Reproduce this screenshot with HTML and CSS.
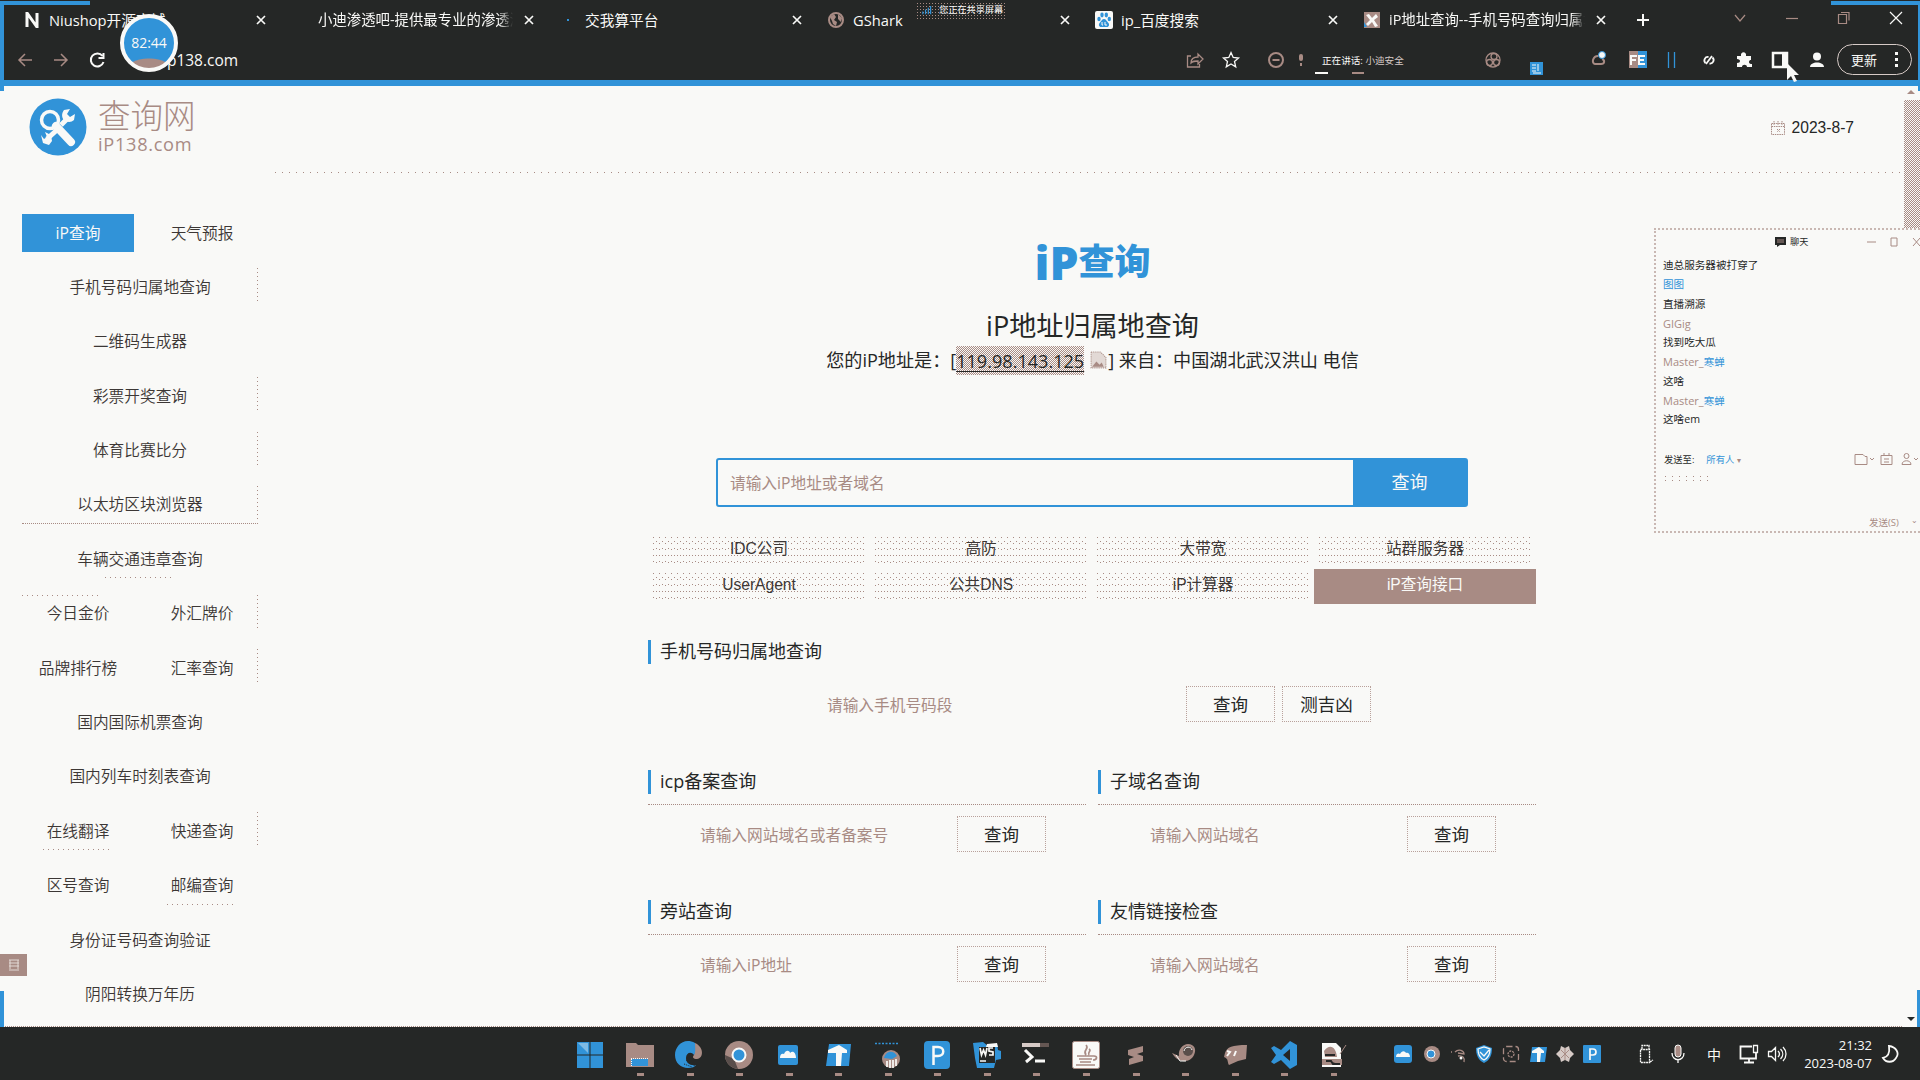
FILE: index.html
```html
<!DOCTYPE html>
<html lang="zh-CN">
<head>
<meta charset="utf-8">
<title>iP地址查询</title>
<link rel="stylesheet" href="styles.css">
</head>
<body>
<header class="browser">
  <div class="tabs">
    <div class="tab"><svg class="fav" viewBox="0 0 16 16"><path d="M3 15V1l10 14V1" fill="none" stroke="#f9f9f7" stroke-width="3"/></svg><span class="tab-title">Niushop开源商城</span><span class="x"><svg viewBox="0 0 10 10"><path d="M1 1l8 8M9 1l-8 8"/></svg></span></div>
    <div class="tab"><span class="tab-title wide">小迪渗透吧-提供最专业的渗透测</span><span class="x"><svg viewBox="0 0 10 10"><path d="M1 1l8 8M9 1l-8 8"/></svg></span></div>
    <div class="tab"><i class="speck"></i><span class="tab-title">交我算平台</span><span class="x"><svg viewBox="0 0 10 10"><path d="M1 1l8 8M9 1l-8 8"/></svg></span></div>
    <div class="tab"><svg class="fav" viewBox="0 0 16 16"><circle cx="8" cy="8" r="7" fill="#252726" stroke="#a88b84" stroke-width="2"/><path d="M2 5l4-3 2 3-2 3 3 2-1 4-3-2-1-3zM10 2l4 4-1 4-3-3z" fill="#a88b84"/></svg><span class="tab-title">GShark</span><span class="x"><svg viewBox="0 0 10 10"><path d="M1 1l8 8M9 1l-8 8"/></svg></span></div>
    <div class="tab"><svg class="fav baidu" viewBox="0 0 18 18"><rect width="18" height="18" rx="2" fill="#f9f9f7"/><g fill="#3193d8"><ellipse cx="4" cy="8" rx="1.7" ry="2.3"/><ellipse cx="7" cy="4" rx="1.7" ry="2.4"/><ellipse cx="11.3" cy="4" rx="1.7" ry="2.4"/><ellipse cx="14.3" cy="8" rx="1.7" ry="2.3"/><path d="M9 8c2 0 2.500 2 4 3.500 2 2 1 4.500-1 4.500H6c-2 0-3-2.500-1-4.500C6.500 10 7 8 9 8z"/></g><path d="M7 11v3h1M10 11v3h2" stroke="#f9f9f7" fill="none"/></svg><span class="tab-title">ip_百度搜索</span><span class="x"><svg viewBox="0 0 10 10"><path d="M1 1l8 8M9 1l-8 8"/></svg></span></div>
    <div class="tab"><svg class="fav" viewBox="0 0 16 16"><rect width="16" height="16" fill="#a88b84"/><path d="M2 3l3-1 3 4 4-4 2 3-4 3 4 6-3 1-3-5-4 4-2-2 4-4z" fill="#f9f9f7"/><path d="M0 10l3 5H0z" fill="#3193d8"/></svg><span class="tab-title wide">iP地址查询--手机号码查询归属地</span><span class="x"><svg viewBox="0 0 10 10"><path d="M1 1l8 8M9 1l-8 8"/></svg></span></div>
    <svg class="plus" viewBox="0 0 14 14"><path d="M7 1v12M1 7h12" stroke="#f9f9f7" stroke-width="2"/></svg>
    <div class="winbtns">
      <svg viewBox="0 0 14 14"><path d="M2 4l5 6 5-6"/></svg>
      <svg viewBox="0 0 14 14"><path d="M1 7.500h12"/></svg>
      <svg viewBox="0 0 14 14"><path d="M1.500 3.500h8v9h-8zM4 1.500h8v8"/></svg>
      <svg viewBox="0 0 14 14"><path d="M1 1l12 12M13 1L1 13" stroke="#f9f9f7"/></svg>
    </div>
  </div>
  <div class="toolbar">
    <div class="nav">
      <svg viewBox="0 0 18 18"><path d="M16 9H3M9 3L3 9l6 6" stroke="#a88b84"/></svg>
      <svg viewBox="0 0 18 18"><path d="M2 9h13M9 3l6 6-6 6" stroke="#a88b84"/></svg>
      <svg viewBox="0 0 18 18"><path d="M14.500 5A6.500 6.500 0 1 0 15.500 11M15.500 2v5h-5" stroke="#f9f9f7" stroke-width="2"/></svg>
      <span class="url">ip138.com</span>
    </div>
    <div class="tools">
      <svg viewBox="0 0 20 20"><path d="M6 6H2.500v11h12v-3M6 13c0-4 3-6 7-6V4l5 5-5 5v-3c-4 0-5 0-7 2z" class="b"/></svg>
      <svg viewBox="0 0 20 20"><path d="M10 2.500l2.200 5 5.300.5-4 3.500 1.200 5.300-4.700-2.800-4.700 2.800 1.200-5.300-4-3.500 5.300-.5z" class="w"/></svg>
      <svg viewBox="0 0 20 20"><circle cx="10" cy="10" r="7" class="b2"/><path d="M6.500 10h7" class="b2"/></svg>
      <svg viewBox="0 0 20 20"><rect x="8" y="4" width="4" height="7" rx="2" fill="#a88b84"/><path d="M10 13v3" class="b2"/></svg>
      <span class="speaking"><b>正在讲话:</b> 小迪安全</span>
      <svg viewBox="0 0 20 20"><circle cx="10" cy="10" r="7" class="b"/><circle cx="6.500" cy="12.500" r="3" class="b"/><circle cx="13.500" cy="12.500" r="3" class="b"/><circle cx="11" cy="6.500" r="3" class="b"/></svg>
      <svg viewBox="0 0 20 20" class="low"><rect x="3" y="3" width="13" height="13" fill="#3193d8"/><path d="M5 6h4M5 9h4M5 12h4M11 5v7M6 14h8" stroke="#f9f9f7"/></svg>
      <svg viewBox="0 0 20 20"><path d="M9 6c-5 0-7 7-3 8h6c4 0 4-4 1-5" class="b2"/><circle cx="13" cy="5" r="3.500" fill="#f9f9f7" stroke="#3193d8"/></svg>
      <svg viewBox="0 0 20 20"><rect x="1" y="1" width="9" height="17" fill="#a88b84"/><rect x="10" y="1" width="9" height="17" fill="#3193d8"/><path d="M3 15V6h6M3 10h5M17 6h-6v8h6M11 10h5" fill="none" stroke="#f9f9f7" stroke-width="2"/></svg>
      <svg viewBox="0 0 20 20"><path d="M7.500 2v16M13.500 2v16" stroke="#3193d8" stroke-width="1.300"/></svg>
      <svg viewBox="0 0 20 20"><path d="M6.500 13a3.500 3.500 0 0 1 3-6M13.500 7.500a3.500 3.500 0 0 1-3 6M13 6L7 14" class="w2"/></svg>
      <svg viewBox="0 0 20 20"><path d="M3 6h4c-1-5 6-5 5 0h5v4c-1 0-2 .5-2 2s1 2 3 2v3h-5c0-3-5-3-5 0H3v-4c4 0 4-4 0-4z" fill="#f9f9f7"/></svg>
      <svg viewBox="0 0 20 20"><path d="M3 3h14v14H3z" fill="none" stroke="#f9f9f7" stroke-width="2.500"/><path d="M12 3h5v14h-5z" fill="#f9f9f7"/></svg>
      <svg viewBox="0 0 20 20"><circle cx="10" cy="6.500" r="4" fill="#f9f9f7"/><path d="M3 17c0-6 14-6 14 0z" fill="#f9f9f7"/></svg>
      <span class="update">更新<i></i></span>
    </div>
  </div>
</header>

<main class="page">
  <div class="site-head">
    <div class="logo">
      <svg viewBox="0 0 58 58"><circle cx="29" cy="29" r="28.500" fill="#3193d8"/><circle cx="21" cy="22" r="8.500" fill="none" stroke="#f9f9f7" stroke-width="3.500"/><path d="M27 28l15 16" stroke="#f9f9f7" stroke-width="8" stroke-linecap="round"/><path d="M29 31L18 41M32 27l7-7" stroke="#f9f9f7" stroke-width="5"/><path d="M35 12c-3 4-2 8 0 10s7 3 10 0l1-6-5 3-3-3 3-5zM12 37l2 8 6 2 3-4-1-6-6-3 2 5-3 2z" fill="#f9f9f7"/></svg>
      <div class="logo-text"><strong>查询网</strong><span>iP138.com</span></div>
    </div>
    <div class="date"><svg viewBox="0 0 16 16"><path d="M1.500 3.500h13v11h-13zM1.500 6.500h13M4 1v4M8 1v4M12 1v4M7 9l3 3M10 9l-3 3"/></svg>2023-8-7</div>
  </div>
  <div class="content">
    <nav class="side">
      <a class="on">iP查询</a><a class="bare">天气预报</a>
      <a class="full">手机号码归属地查询</a>
      <a class="full bare">二维码生成器</a>
      <a class="full">彩票开奖查询</a>
      <a class="full">体育比赛比分</a>
      <a class="full line">以太坊区块浏览器</a>
      <a class="full sparse">车辆交通违章查询</a>
      <a class="top">今日金价</a><a>外汇牌价</a>
      <a class="bare">品牌排行榜</a><a>汇率查询</a>
      <a class="full bare">国内国际机票查询</a>
      <a class="full bare">国内列车时刻表查询</a>
      <a class="sparse">在线翻译</a><a>快递查询</a>
      <a class="bare">区号查询</a><a class="sparse">邮编查询</a>
      <a class="full bare">身份证号码查询验证</a>
      <a class="full bare">阴阳转换万年历</a>
    </nav>
    <section class="main">
      <h1><span>iP</span>查询</h1>
      <h2>iP地址归属地查询</h2>
      <p class="ip">您的iP地址是：[<u>119.98.143.125</u><svg viewBox="0 0 18 18"><path d="M2 1h9l5 5v10H2z" fill="#e2d9d5" stroke="#a88b84" stroke-dasharray="1 1"/><path d="M3 15l4-5 3 3 2-2 2 4z" fill="#a88b84"/></svg>] 来自：中国湖北武汉洪山 电信</p>
      <div class="search"><span>请输入iP地址或者域名</span><b>查询</b></div>
      <div class="links"><a>IDC公司</a><a>高防</a><a>大带宽</a><a>站群服务器</a><a>UserAgent</a><a>公共DNS</a><a>iP计算器</a><a class="hot">iP查询接口</a></div>
      <div class="cards">
        <div class="card wide-card"><h3>手机号码归属地查询</h3><div class="form"><span>请输入手机号码段</span><b>查询</b><b>测吉凶</b></div></div>
        <div class="card"><h3>icp备案查询</h3><div class="form"><span>请输入网站域名或者备案号</span><b>查询</b></div></div>
        <div class="card"><h3>子域名查询</h3><div class="form"><span>请输入网站域名</span><b>查询</b></div></div>
        <div class="card"><h3>旁站查询</h3><div class="form"><span>请输入iP地址</span><b>查询</b></div></div>
        <div class="card"><h3>友情链接检查</h3><div class="form"><span>请输入网站域名</span><b>查询</b></div></div>
      </div>
    </section>
  </div>
</main>

<footer class="taskbar">
  <div class="apps">
    <svg viewBox="0 0 28 28"><path d="M1 1h12.500v12.500H1zM14.500 1H27v12.500H14.500zM1 14.500h12.500V27H1zM14.500 14.500H27V27H14.500z" fill="#3193d8"/><path d="M2 2h10v10z" fill="#9fcbe9" opacity=".7"/></svg>
    <svg viewBox="0 0 28 28"><path d="M0 2h10l2 2h16v22H0z" fill="#a88b84"/><path d="M5 18h17v7H5z" fill="#3193d8"/><path d="M5 17.500h17M5.500 18v8" stroke="#f9f9f7" stroke-dasharray="1 1"/></svg>
    <svg viewBox="0 0 28 28"><path d="M20 2c9 4 9 15 2 16-4 0-5-2-3-4z" fill="#a88b84"/><path d="M20 2C9-4 0 5 0 14c0 8 6 13 13 13 4 0 7-1 8-3-6 1-10-2-10-7 0-5 5-7 8-3 2-3 1-8 1-12z" fill="#3193d8"/><path d="M11 19l9 6M9 23l8 3" stroke="#252726" stroke-dasharray="1 1"/></svg>
    <svg viewBox="0 0 28 28"><circle cx="14" cy="14" r="14" fill="#a88b84"/><path d="M0 14l9 4 4 10C5 27 0 21 0 14z" fill="#594e4b"/><circle cx="14" cy="14" r="6.500" fill="#3193d8" stroke="#f9f9f7" stroke-width="2"/></svg>
    <svg viewBox="0 0 28 28"><rect x="4" y="4" width="20" height="20" rx="2" fill="#3193d8"/><path d="M6 17c0-4 2-5 4-4 2-5 6-3 6-1 3-3 6 0 6 5z" fill="#f9f9f7"/></svg>
    <svg viewBox="0 0 28 28"><path d="M5 3h22l-2 22H2z" fill="#3193d8"/><path d="M4 9l11-5 8 5v3h-5l-1 13h-5V12H4z" fill="#f9f9f7"/></svg>
    <svg viewBox="0 0 28 28"><path d="M1 2.500h23" stroke="#3193d8" stroke-dasharray="2 1.500" stroke-width="1.500"/><circle cx="17" cy="18" r="9" fill="#a88b84"/><path d="M10 17c2-8 10-8 13-2l-5 3z" fill="#3193d8"/><path d="M13 20v6M16 19v8M19 19v8M22 18v7" stroke="#f9f9f7" stroke-width="1.700"/></svg>
    <svg viewBox="0 0 28 28"><rect x="1" y="0" width="26" height="28" rx="4" fill="#3193d8"/><path d="M10.500 24V6H15c7 0 7 9 0 9h-4" fill="none" stroke="#f9f9f7" stroke-width="2.500"/></svg>
    <svg viewBox="0 0 28 28"><path d="M0 2l10-1 5 4 9-2 1 6 3 1v8l-5 1-2 8H4L2 17z" fill="#3193d8"/><path d="M6 6h16v16H6z" fill="#252726"/><path d="M14 3l10-1 1 4H13z" fill="#f9f9f7"/><path d="M7 7l1.500 7 2-5 2 5L14 7M20 7h-4v3l4 1v3h-4M7 20h6" fill="none" stroke="#f9f9f7" stroke-width="1.700"/></svg>
    <svg viewBox="0 0 28 28"><path d="M0 4h18" stroke="#d6cac6" stroke-width="4"/><path d="M18 4h9" stroke="#655753" stroke-width="4"/><path d="M3 9l7 7-6 5M13 20h10" fill="none" stroke="#f9f9f7" stroke-width="3"/></svg>
    <svg viewBox="0 0 28 28"><rect x=".5" y=".5" width="27" height="27" rx="2" fill="#f9f9f7" stroke="#a88b84"/><path d="M14 4c4 4-4 5 0 10M17 8c3 2-2 3 0 6M5 15h17c4 0 3 4-1 4M7 18h13M8 21h11M4 24h19" fill="none" stroke="#a88b84" stroke-width="1.700"/></svg>
    <svg viewBox="0 0 28 28"><path d="M6 9l15-4v6l-6 2 6 2v5L7 24v-6l5-2-6-2z" fill="#a88b84"/></svg>
    <svg viewBox="0 0 28 28"><path d="M1 12l7 3c-1-7 4-12 9-12 6 0 9 5 6 11-3 7-15 10-22-2z" fill="#a88b84"/><circle cx="17" cy="10" r="5" fill="#594e4b"/><path d="M13 10c1-5 7-5 8-1M5 14l4 6h6" fill="none" stroke="#f9f9f7"/></svg>
    <svg viewBox="0 0 28 28"><path d="M4 12c2-6 7-8 22-8l-1 14-8 2-9 4c-2-3 0-6-5-8z" fill="#a88b84"/><path d="M6 10l3 1-3 4M15 10l-2 5" stroke="#f9f9f7" stroke-width="2" fill="none"/></svg>
    <svg viewBox="0 0 28 28"><path d="M20 0l7 4v20l-7 4-9-9-7 4-3-2 5-7-5-7 3-2 7 4zM20 8l-7 6 7 6z" fill="#3193d8" fill-rule="evenodd"/></svg>
    <svg viewBox="0 0 28 28"><path d="M2 2h14l5 5v19H2z" fill="#f9f9f7"/><path d="M4 10c6-8 12-4 13 6H5zM2 18h20v6H2z" fill="#a88b84"/><path d="M5 14h10M6 20h5l2 3h7" stroke="#252726" stroke-width="2"/><path d="M20 13l6-9" stroke="#a88b84"/></svg>
  </div>
  <div class="tray">
    <svg viewBox="0 0 20 20"><rect x="1" y="1" width="18" height="18" rx="3" fill="#3193d8"/><path d="M3 13c0-4 3-4 4-3 2-4 5-3 6-1 2-1 4 1 4 4z" fill="#f9f9f7"/></svg>
    <svg viewBox="0 0 20 20"><circle cx="11" cy="10" r="8" fill="#a88b84"/><circle cx="10" cy="10" r="4" fill="#3193d8" stroke="#f9f9f7"/></svg>
    <svg viewBox="0 0 20 20"><path d="M6 8c4-4 9-1 9 2l-6-1M9 12c5-1 7 2 6 6M2 8h1" class="b"/><circle cx="12" cy="14" r="1.500" fill="#f9f9f7"/></svg>
    <svg viewBox="0 0 20 20"><path d="M10 1l8 3c0 7-2 12-8 15C4 16 2 11 2 4z" fill="#3193d8"/><path d="M4 5l6-2 6 2c0 5-2 9-6 11-4-2-6-6-6-11zM6 8l4 4 5-6" class="w"/></svg>
    <svg viewBox="0 0 20 20"><rect x="2.500" y="2.500" width="15" height="15" rx="3" class="b" stroke-dasharray="6 3"/><circle cx="10" cy="10" r="3" class="b" stroke-dasharray="2 1"/></svg>
    <svg viewBox="0 0 20 20"><path d="M4 3h15l-2 15H2z" fill="#3193d8"/><path d="M4 7l7-4 5 4v2h-3l-1 9H9V9H4z" fill="#f9f9f7"/></svg>
    <svg viewBox="0 0 20 20"><path d="M6 2l4 2 4-2 1 4 4 4-4 4-1 4-4-2-4 2-1-4-4-4 4-4z" fill="#d6cac6"/><path d="M6 6l8 8M14 6l-8 8M10 4v12" stroke="#a88b84"/></svg>
    <svg viewBox="0 0 20 20"><rect x="1" y="1" width="18" height="18" rx="1" fill="#3193d8"/><path d="M8 16V5h3c4 0 4 6 0 6H8" fill="none" stroke="#f9f9f7" stroke-width="1.700"/></svg>
    <svg viewBox="0 0 20 20"><path d="M7 5V1.500h7V5M5.500 5.500h9v13h-9zM15 18l3-2" class="w" stroke-dasharray="2 .6"/></svg>
    <svg viewBox="0 0 20 20"><rect x="7" y="1" width="6" height="12" rx="3" fill="#a88b84" stroke="#f9f9f7"/><path d="M4 9c0 9 12 9 12 0M10 16v3" class="w"/></svg>
    <span class="ime">中</span>
    <svg viewBox="0 0 20 20"><path d="M13 2.500H1.500v12H17V9M5 18.500h10M10 15v3" class="w2"/><path d="M14.500 1.500h4v7h-4z" class="w"/></svg>
    <svg viewBox="0 0 20 20"><path d="M1.500 7.500h3l4-4v13l-4-4h-3zM11 7c2 2 2 4 0 6M13.500 5c3 3 3 7 0 10M16 3c4 4 4 10 0 14" class="w"/></svg>
    <div class="clock"><span>21:32</span><span>2023-08-07</span></div>
    <svg viewBox="0 0 20 20"><path d="M8 2c1 7-1 11-6 12 3 5 10 5 13 0 4-5 0-11-7-12z" class="w2"/></svg>
  </div>
</footer>

<div class="scroll"><i class="up"></i><i class="thumb"></i><i class="down"></i></div>
<aside class="chat">
  <div class="chat-head"><svg viewBox="0 0 11 10"><path d="M0 0h11v8H5l-3 2V8H0z" fill="#252726"/><path d="M2 3h7M2 5h7" stroke="#a88b84"/></svg><span>聊天</span><svg class="cw" viewBox="0 0 56 10"><path d="M1 5h9M25 1h6v8h-6zM47 1l7 8M54 1l-7 8"/></svg></div>
  <ul><li>迪总服务器被打穿了</li><li class="u">图图</li><li>直播溯源</li><li class="g">GIGig</li><li>找到吃大瓜</li><li class="g">Master_<b>寒蝉</b></li><li>这啥</li><li class="g">Master_<b>寒蝉</b></li><li>这啥em</li></ul>
  <div class="sendto"><span>发送至:</span><em>所有人 <small>▾</small></em><svg viewBox="0 0 64 14"><path d="M1 2.500h8l2 2h2v8H1zM16 6l2 2 2-2M27 3.500h11v9H27zM30 1v3M35 1v3M30 7h5M30 10h5M48 12.500c0-5 9-5 9 0zM60 6l2 2 2-2"/><circle cx="52.500" cy="4" r="2.500"/></svg></div>
  <i class="specks"></i>
  <div class="send">发送(S)<small>⌄</small></div>
</aside>
<div class="share"><svg viewBox="0 0 12 12"><path d="M2 10V7M5 10V5M8 10V3M10.500 10V1" stroke="#3193d8" stroke-width="1.300"/></svg>您正在共享屏幕</div>
<div class="timer"><span>82:44</span></div>
<i class="edge tl"></i><i class="edge tr"></i><i class="edge bl"></i><i class="edge br"></i>
<i class="talk"></i>
<div class="handle"><svg viewBox="0 0 14 14"><path d="M2 2h10M2 5h10M2 8h10M2 12h10M3 2v9M11 2v9"/></svg></div>
<svg class="cursor" viewBox="0 0 14 20"><path d="M1 0l12 12H8l3 6-3 1-3-6-4 4z" fill="#f9f9f7"/></svg>
</body>
</html>
```
FILE: styles.css
```css
:root{--ink:#252726;--paper:#f9f9f7;--blue:#3193d8;--clay:#a88b84}
*{box-sizing:border-box}
body{margin:0;width:1920px;height:1080px;overflow:hidden;display:flex;flex-direction:column;background:var(--paper);color:var(--ink);font-family:"Open Sans","Noto Sans CJK SC",sans-serif;position:relative}
svg{display:block;flex:none}
h1,h2,h3,p,ul{margin:0;padding:0;font-weight:400}
ul{list-style:none}
b{font-weight:400}
.b,.b2,.w,.w2{fill:none;stroke:var(--clay);stroke-width:1.3}
.b2{stroke-width:2}
.w,.w2{stroke:var(--paper)}
.w2{stroke-width:1.8}

.browser{height:86px;flex:none;background:var(--ink);border-bottom:6px solid var(--blue);color:var(--paper)}
.tabs{height:40px;display:flex;align-items:center;padding-left:16px}
.tab{width:268px;height:40px;display:flex;align-items:center;padding:0 12px 0 8px;gap:9px;flex:none}
.fav{width:16px;height:16px}
.baidu{width:18px;height:18px;margin:0 -1px}
.speck{width:2px;height:2px;background:var(--blue);margin:0 7px}
.tab-title{flex:1;min-width:0;font-size:14.7px;line-height:20px;white-space:nowrap;overflow:hidden}
.tab-title.wide{mask-image:linear-gradient(90deg,#000 93%,transparent);margin-right:-4px;font-size:14.4px}
.tab-title:first-child{margin-left:26px}
.x{width:22px;display:flex;justify-content:center}
.x svg{width:10px;height:10px;fill:none;stroke:var(--paper);stroke-width:1.7}
.plus{width:14px;height:14px;margin-left:12px}
.winbtns{display:flex;gap:38px;margin-left:83px;margin-top:-5px}
.winbtns svg{width:14px;height:14px;fill:none;stroke:var(--clay);stroke-width:1.2}
.toolbar{height:39px;display:flex}
.nav{width:1185px;padding-left:16px;display:flex;align-items:center;gap:18px}
.nav svg{width:18px;height:18px;fill:none;stroke-width:1.5}
.url{font-size:15.5px;margin-left:39px}
.tools{display:grid;align-items:center;grid-template-columns:36px 45px 25px 31px 161px 44px 62px 39px 33px 38px 35px 36px 37px 30px 75px}
.tools svg{width:20px;height:20px}
.tools .low{margin-top:18px}
.speaking{font-size:9.6px;color:#d6cac6;white-space:nowrap}
.speaking b{color:var(--paper)}
.update{height:31px;border:1.5px solid #d6cac6;border-radius:16px;display:flex;align-items:center;justify-content:space-between;padding:0 13px;font-size:13px}
.update i{width:3px;height:15px;background:repeating-linear-gradient(var(--paper) 0 3px,transparent 3px 6px)}

.page{height:941px;flex:none;overflow:hidden;border-bottom:1px dotted var(--clay)}
.site-head{height:87px;display:flex;justify-content:space-between;padding:12px 66px 0 29px;background:repeating-linear-gradient(90deg,var(--clay) 0 1px,transparent 1px 7px) 275px 86px/1628px 1px no-repeat}
.logo{display:flex;gap:11px;height:58px}
.logo svg{width:58px;height:58px}
.logo-text{display:flex;flex-direction:column;color:var(--clay)}
.logo-text strong{font-weight:300;font-size:32.5px;line-height:35px;height:35px}
.logo-text span{font-size:18.2px;line-height:22px;letter-spacing:.7px}
.date{height:30px;margin-top:15px;display:flex;gap:6px;align-items:center;font-family:"Liberation Sans","Open Sans",sans-serif;font-size:15.6px}
.date svg{width:16px;height:16px;fill:none;stroke:var(--clay);stroke-width:1;stroke-dasharray:1.5 .8}
.content{display:flex;padding-left:22px}
.side{width:236px;margin-top:41px;display:grid;grid-template-columns:112px 112px;column-gap:12px;row-gap:16.4px;grid-auto-rows:38px;font-size:15.7px;flex:none;height:855px}
.side a{display:flex;align-items:center;justify-content:center;padding-bottom:2px;color:#3c3735;font-weight:350;background:repeating-linear-gradient(var(--clay) 0 1px,transparent 1px 4px) right top/1px 36px no-repeat}
.side .bare{background:none}
.side .full{grid-column:1/3}
.side .line{border-bottom:1px dotted var(--clay)}
.side .on{background:var(--blue);color:var(--paper);font-weight:400}
.side .sparse{background:repeating-linear-gradient(90deg,var(--clay) 0 1px,transparent 1px 5px) center bottom/70px 1px no-repeat}
.side .top{background:repeating-linear-gradient(90deg,var(--clay) 0 1px,transparent 1px 5px) left top/80px 1px no-repeat}
.main{width:889px;margin-left:390px;padding-top:65px;display:flex;flex-direction:column}
h1{height:48px;color:var(--blue);font-size:36px;font-weight:900;line-height:48px;display:flex;justify-content:center;align-items:center}
h1 span{font-size:46px;font-weight:800}
h2{height:36px;line-height:36px;margin-top:22px;text-align:center;font-size:27.1px}
.ip{height:29px;margin-top:2px;display:flex;align-items:center;justify-content:center;font-size:18.1px;line-height:29px;white-space:pre}
.ip u{height:29px;line-height:31px;text-underline-offset:3px;background:repeating-conic-gradient(var(--clay) 0 25%,var(--paper) 0 50%) 0 0/2px 2px}
.ip svg{width:19px;height:19px;margin-left:5px}
.search{width:752px;height:49px;margin:83px 0 0 68px;border:2px solid var(--blue);border-radius:3px;display:flex;align-items:center;justify-content:space-between;padding-left:12px;font-size:15.7px;color:var(--clay)}
.search span{padding-bottom:1px}
.search b{width:113px;height:45px;line-height:45px;text-align:center;background:var(--blue);color:var(--paper);font-size:18px}
.links{margin-top:26px;display:grid;grid-template-columns:repeat(4,222px);grid-auto-rows:35px;row-gap:1px;font:15.6px "Liberation Sans","Noto Sans CJK SC",sans-serif}
.links a{display:flex;align-items:center;justify-content:center;color:#3c3735;line-height:24px;padding-bottom:5px}
.links a:not(.hot){background:radial-gradient(circle at .5px .5px,var(--clay) .6px,transparent .7px) 0 0/6px 6px,radial-gradient(circle at .5px .5px,var(--clay) .6px,transparent .7px) 3px 4px/6px 7px;border:solid var(--paper);border-width:4px 5px 2px}
.links .hot{background:var(--clay);color:var(--paper);padding-bottom:3px}
.cards{margin-top:36px;display:grid;grid-template-columns:438px 438px;column-gap:12px;row-gap:35px}
.wide-card{grid-column:1/3}
.card{height:95px}
.card h3{height:35px;border-bottom:1px dotted var(--clay);font-size:18px;line-height:22px;padding-left:12px;background:linear-gradient(var(--blue),var(--blue)) left top/3px 24px no-repeat}
.wide-card h3{border-bottom-color:transparent}
.form{height:60px;display:flex;align-items:center;gap:7px;padding:0 40px 2px 52px}
.form span{flex:1;color:var(--clay);font-size:15.7px}
.form b{width:89px;height:36px;display:flex;align-items:center;justify-content:center;padding-bottom:1px;border:1px dotted #b9a19b;font-size:17.5px}
.wide-card .form{padding:0 165px 2px 179px}

.taskbar{height:53px;flex:none;background:var(--ink);display:flex;color:var(--paper)}
.apps{width:1393px;padding:14px 0 0 576px;display:flex;gap:21.6px;background:repeating-linear-gradient(90deg,var(--clay) 0 7px,transparent 7px 49.55px) 637px 46px/700px 3px no-repeat}
.apps svg{width:28px;height:28px;overflow:visible}
.tray{display:grid;grid-template-columns:28px 28px 25px 27px 27px 27px 27px 53px 33px 36px 35px 28px 33px 81px 20px;align-items:center}
.tray svg{width:20px;height:20px}
.ime{font-size:14px;padding-left:3px}
.clock{width:72px;display:flex;flex-direction:column;align-items:flex-end;font-size:13px;line-height:18px}

.scroll{position:absolute;left:1903px;top:86px;width:17px;height:941px;display:flex;flex-direction:column;background:var(--paper)}
.thumb{margin:6px 0 0 1px;height:130px;background:repeating-conic-gradient(var(--clay) 0 25%,var(--paper) 0 50%) 0 0/2px 2px}
.up,.down{width:0;height:0;border:4px solid transparent;margin-left:4px}
.up{border-bottom-color:var(--clay)}
.down{border-top-color:var(--ink);margin-top:auto;margin-bottom:2px}
.chat{position:absolute;left:1654px;top:228px;width:266px;height:305px;background:var(--paper);border:2px dotted #c9b8b3;border-right:0;padding:6px 0 0 7px;display:flex;flex-direction:column}
.chat-head{height:12px;display:flex;align-items:center;font-size:9.2px;line-height:12px;padding-left:112px;gap:4px;white-space:nowrap}
.chat-head span{width:19px;flex:none}
.chat-head svg{width:11px;height:10px}
.chat-head .cw{width:56px;margin-left:53px;fill:none;stroke:var(--clay)}
.chat ul{margin-top:8px;font-size:10.6px;line-height:19.25px}
.chat li{height:19.25px}
.chat .u,.chat li b{color:var(--blue)}
.chat .g{color:var(--clay);font-size:11px}
.chat li b{font-size:10.5px}
.sendto{margin-top:22px;height:16px;display:flex;align-items:center;font-size:9.3px;padding-left:1px}
.sendto em{font-style:normal;color:var(--blue);margin-left:12px;width:148px;white-space:nowrap}
.sendto small{color:var(--clay)}
.sendto svg{width:64px;height:14px;fill:none;stroke:var(--clay)}
.specks{width:47px;height:6px;margin:9px 0 0 2px;background:radial-gradient(circle at .5px .5px,var(--clay) .6px,transparent .7px) 0 0/7px 4px}
.send{margin-top:33px;padding-left:206px;display:flex;gap:12px;font-size:9.5px;color:var(--clay)}
.share{position:absolute;left:917px;top:3px;width:88px;height:16px;display:flex;align-items:center;gap:7px;padding:0 0 2px 4px;font-size:9.2px;line-height:12px;color:var(--paper);white-space:nowrap;background:radial-gradient(circle at .5px .5px,var(--clay) .6px,transparent .7px) 0 0/3px 3px}
.share svg{width:11px;height:11px}
.timer{position:absolute;left:120px;top:14px;width:58px;height:58px;border:4px solid var(--paper);border-radius:50%;background:radial-gradient(ellipse 22px 10px at 50% 100%,var(--clay) 90%,transparent),var(--blue);display:flex;align-items:center;justify-content:center;color:var(--paper);font-size:14px}
.timer span{margin-top:-2px}
.edge{position:absolute;border:0 solid var(--blue)}
.tl{left:0;top:1px;width:90px;height:90px;border-width:4px 0 0 4px;clip-path:polygon(0 0,100% 0,100% 5px,4px 5px,4px 100%,0 100%)}
.tr{left:1831px;top:1px;width:89px;height:90px;border-width:4px 2px 0 0}
.bl{left:0;top:991px;width:4px;height:36px;background:var(--blue)}
.br{left:1917px;top:990px;width:3px;height:37px;background:var(--blue)}
.talk{position:absolute;left:1315px;top:72px;width:49px;height:2px;background:linear-gradient(90deg,var(--paper) 13px,transparent 13px 37px,var(--clay) 37px)}
.handle{position:absolute;left:0;top:954px;width:27px;height:22px;background:var(--clay);display:flex;justify-content:center;align-items:center}
.handle svg{width:14px;height:14px;fill:none;stroke:#e2d9d5;stroke-width:1}
.cursor{position:absolute;left:1786px;top:63px;width:14px;height:20px}
```
